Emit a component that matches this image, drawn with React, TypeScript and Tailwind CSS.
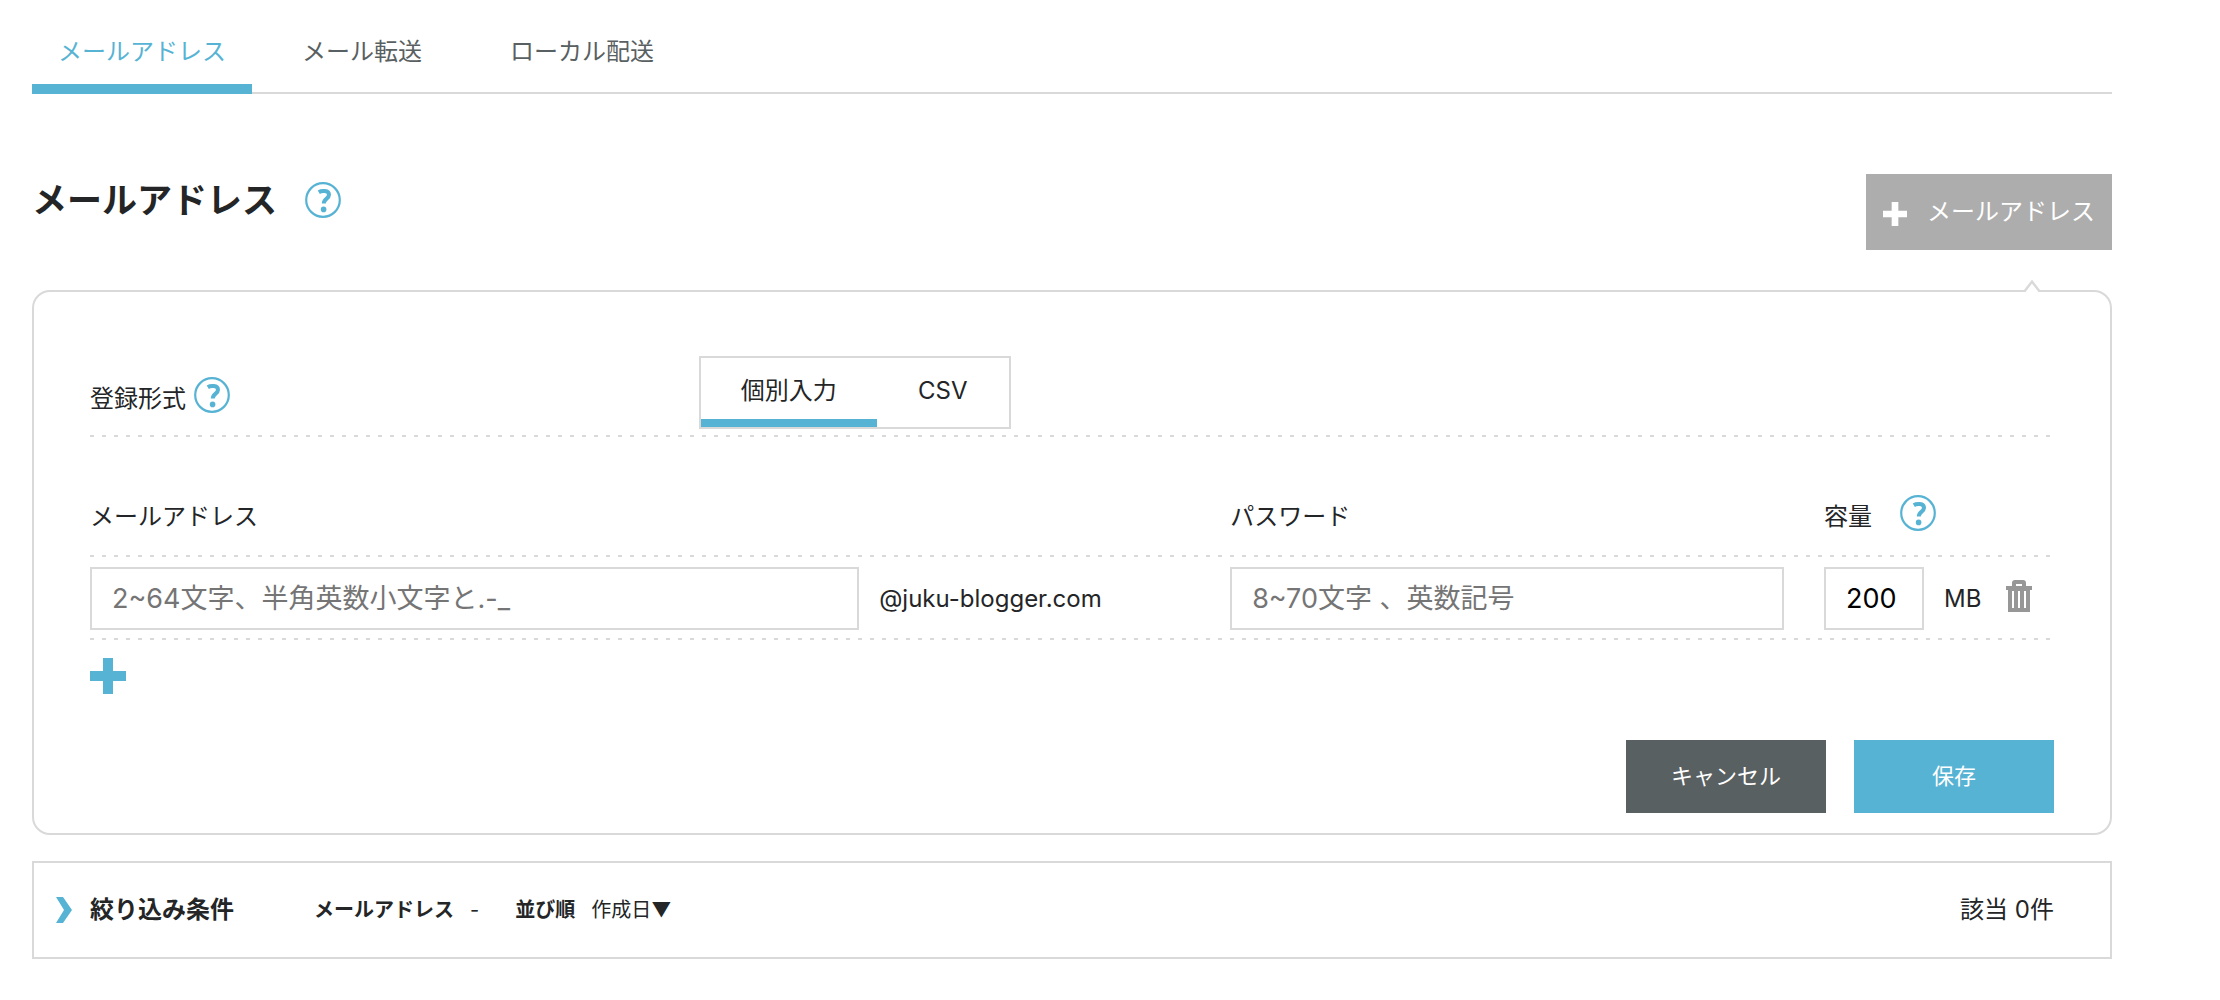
import { useState } from "react";
import { clsx } from "clsx";

const TABS = ["メールアドレス", "メール転送", "ローカル配送"];
const FORMATS = ["個別入力", "CSV"];

type HelpProps = { label: string };

function HelpIcon({ label }: HelpProps) {
  return (
    <button type="button" aria-label={label} className="shrink-0 text-[#57b3d4]">
      <svg viewBox="0 0 36 36" className="size-9" fill="none" stroke="currentColor">
        <circle cx="18" cy="18" r="16.8" strokeWidth="2.2" />
        <path d="M13.8 10.2c2.4-1.5 10.2-2.3 10.2 2.6 0 4.2-5.2 3.4-5.2 8.8" strokeWidth="4" />
        <circle cx="18.6" cy="27.4" r="2.8" fill="currentColor" stroke="none" />
      </svg>
    </button>
  );
}

function PlusIcon({ className }: { className?: string }) {
  return (
    <svg viewBox="0 0 36 36" className={className} fill="currentColor">
      <path d="M13 0h10v13h13v10H23v13H13V23H0V13h13z" />
    </svg>
  );
}

function TrashIcon() {
  return (
    <svg viewBox="0 0 26 32" className="h-8 w-[26px]" fill="currentColor" fillRule="evenodd">
      <path d="M6 6V3q0-3 3-3h8q3 0 3 3v3h6v4h-2v22H2V10H0V6zM10 4v2h6V4zM6 11v17h2V11zM12 11v17h2V11zM18 11v17h2V11z" />
    </svg>
  );
}

// 点線の区切り
function DottedLine() {
  return (
    <div className="h-0.5 bg-[repeating-linear-gradient(90deg,#d9d9d9_0_4px,transparent_4px_12px)]" />
  );
}

const inputClass = "h-[63px] min-w-0 border-2 border-[#d9d9d9] bg-white px-5 text-[27px] text-black placeholder:text-[#757575]";

export default function App() {
  const [tab, setTab] = useState(0);
  const [format, setFormat] = useState(0);

  return (
    <main className="min-h-screen bg-white pr-[108px] pb-10 pl-8 font-[Inter,'Noto_Sans_CJK_JP',sans-serif] text-2xl text-[#232527]">
      <nav className="flex h-[94px] border-b-2 border-[#d9d9d9]">
        {TABS.map((name, i) => (
          <a
            key={name}
            href="#"
            onClick={() => setTab(i)}
            className={clsx(
              "-mb-0.5 flex w-[220px] flex-col justify-end text-center",
              i === tab ? "text-[#57b3d4]" : "text-[#596061]",
            )}
          >
            <span className="pb-4 leading-8">{name}</span>
            <span className={clsx("h-2.5", i === tab && "bg-[#57b3d4]")} />
          </a>
        ))}
      </nav>

      <header className="mt-20 flex items-start justify-between">
        <div className="flex items-center gap-7 pt-1.5">
          <h1 className="text-[35px] leading-10 font-bold">メールアドレス</h1>
          <HelpIcon label="メールアドレスのヘルプ" />
        </div>
        <button
          type="button"
          className="flex h-[76px] w-[246px] items-center justify-center gap-5 bg-[#adadad] text-white"
        >
          <PlusIcon className="mt-1 size-6" />
          メールアドレス
        </button>
      </header>

      <form
        className="relative mt-10 rounded-[18px] border-2 border-[#d9d9d9] pt-16 pr-14 pb-5 pl-14"
        onSubmit={(e) => e.preventDefault()}
      >
        {/* 吹き出しの角 */}
        <svg viewBox="0 0 16 12" className="absolute -top-3 right-[70px] h-3 w-4" fill="#fff">
          <path d="M0 12 8 1.6 16 12" stroke="#d9d9d9" strokeWidth="2.4" />
        </svg>

        <div className="flex items-center pb-1.5">
          <div className="flex w-[31%] items-end gap-2 pt-1">
            <span className="leading-7">登録形式</span>
            <HelpIcon label="登録形式のヘルプ" />
          </div>
          <div className="flex h-[73px] w-[312px] border-2 border-[#d9d9d9]">
            {FORMATS.map((name, i) => (
              <button
                key={name}
                type="button"
                aria-pressed={i === format}
                onClick={() => setFormat(i)}
                className={clsx(
                  "border-b-8 px-10 pt-1 last:flex-1",
                  i === format ? "border-[#57b3d4]" : "border-transparent",
                )}
              >
                {name}
              </button>
            ))}
          </div>
        </div>
        <DottedLine />

        <div className="mt-[58px] grid grid-cols-[1.92fr_1fr_230px] items-end pb-6 leading-7">
          <label htmlFor="address">メールアドレス</label>
          <label htmlFor="password">パスワード</label>
          <div className="flex items-end gap-7">
            <label htmlFor="capacity">容量</label>
            <HelpIcon label="容量のヘルプ" />
          </div>
        </div>
        <DottedLine />

        <div className="grid grid-cols-[1.92fr_1fr_230px] items-center pt-2.5 pb-2">
          <div className="flex items-center gap-5">
            <input id="address" className={clsx(inputClass, "flex-1")} placeholder="2~64文字、半角英数小文字と.-_" />
            <span className="w-[351px]">@juku-blogger.com</span>
          </div>
          <div className="flex pr-10">
            <input id="password" className={clsx(inputClass, "flex-1")} placeholder="8~70文字 、英数記号" />
          </div>
          <div className="flex items-center gap-5">
            <input id="capacity" className={clsx(inputClass, "w-[100px]")} defaultValue="200" />
            <span className="w-[42px]">MB</span>
            <button type="button" aria-label="削除" className="pb-1.5 text-[#979797]">
              <TrashIcon />
            </button>
          </div>
        </div>
        <DottedLine />

        <button type="button" aria-label="行を追加" className="mt-[18px] block text-[#57b3d4]">
          <PlusIcon className="size-9" />
        </button>

        <div className="mt-[46px] flex justify-end gap-7 text-[22px] text-white">
          <button type="button" className="h-[73px] w-[200px] bg-[#596061]">
            キャンセル
          </button>
          <button type="submit" className="h-[73px] w-[200px] bg-[#57b3d4]">
            保存
          </button>
        </div>
      </form>

      <section className="mt-[26px] flex h-[98px] items-center border-2 border-[#d9d9d9] pr-14 pl-[22px]">
        <button type="button" className="flex items-center gap-[18px] font-bold">
          <svg viewBox="0 0 16 26" className="h-[26px] w-4 text-[#57b3d4]" fill="currentColor">
            <path d="M0 0h7l9 13-9 13H0l8-13z" />
          </svg>
          絞り込み条件
        </button>
        <dl className="ml-20 flex flex-1 items-center gap-4 text-xl">
          <dt className="font-bold">メールアドレス</dt>
          <dd className="mr-5">-</dd>
          <dt className="font-bold">並び順</dt>
          <dd>作成日▼</dd>
        </dl>
        <p>該当 0件</p>
      </section>
    </main>
  );
}
